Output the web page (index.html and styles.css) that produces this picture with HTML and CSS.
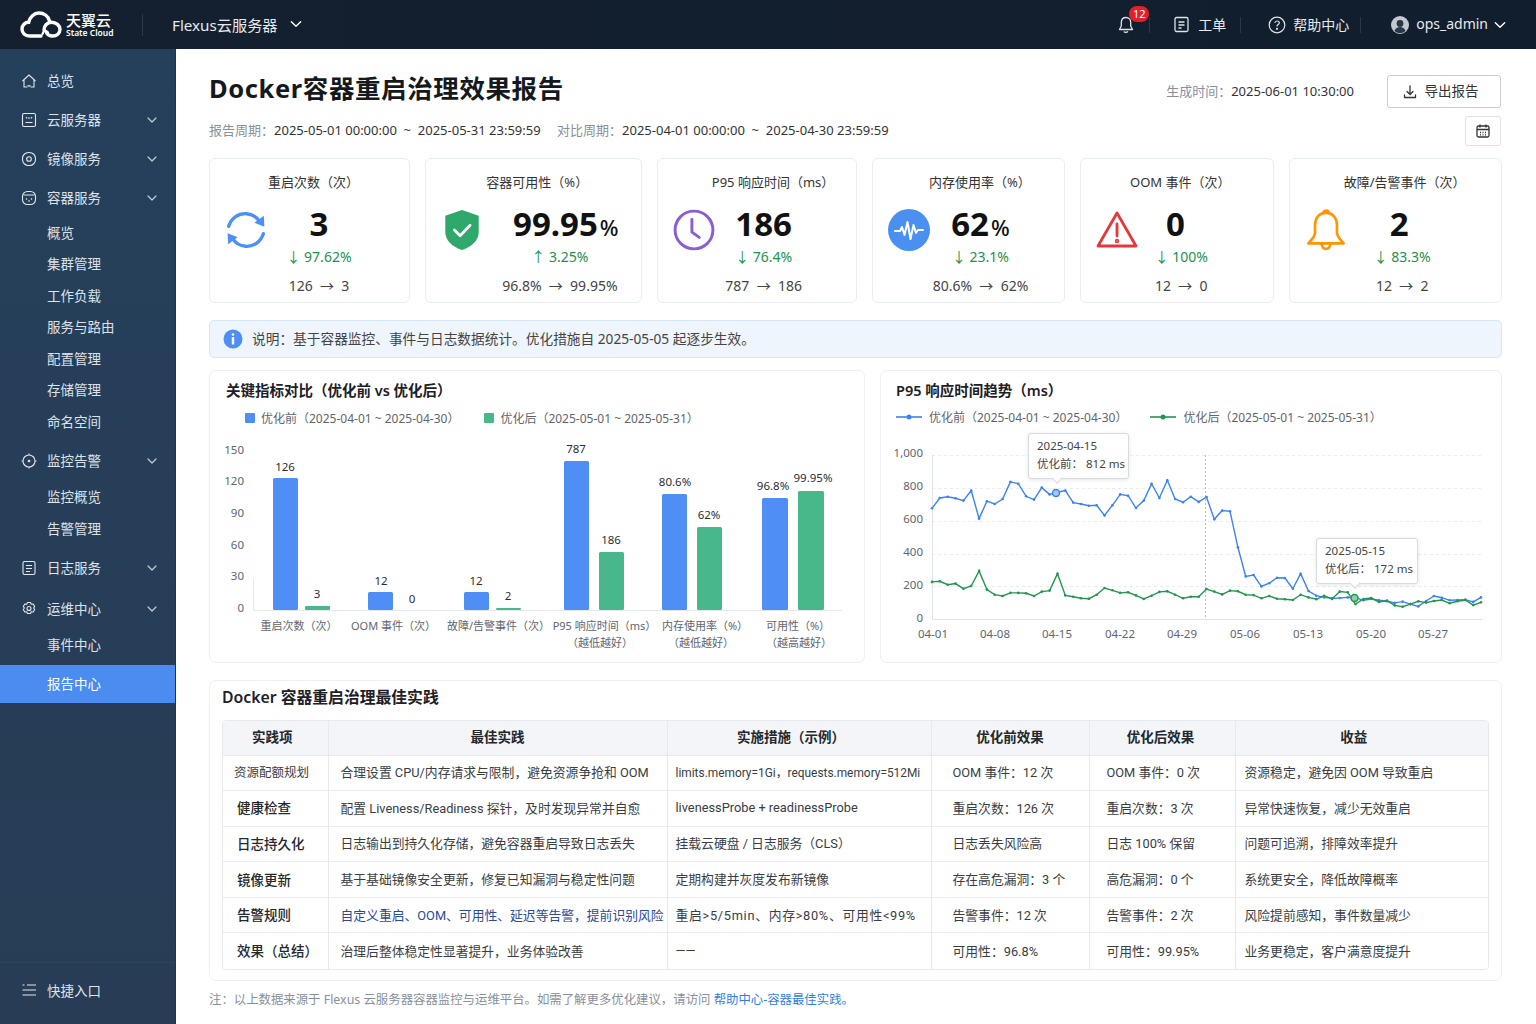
FILE: index.html
```html
<!DOCTYPE html>
<html lang="zh-CN">
<head>
    <meta charset="UTF-8">
    <meta name="viewport" content="width=device-width, initial-scale=1.0">
    <title>Docker容器重启治理效果报告</title>
    <link rel="stylesheet" href="styles.css">
</head>
<body>
    <svg class="sprite" width="0" height="0">
        <symbol id="i-chev" viewBox="0 0 12 12"><path d="M2 4l4 4 4-4" fill="none" stroke="currentColor" stroke-width="1.2" stroke-linecap="round" stroke-linejoin="round"/></symbol>
    </svg>

    <!-- 顶部导航 -->
    <header class="topbar">
        <div class="logo">
            <svg class="logo-cloud" viewBox="0 0 42 28" width="42" height="28" fill="none" stroke="#fff" stroke-width="3.4" stroke-linecap="round">
                <path d="M21 25H9.5C5 25 2 22 2 18c0-3.8 3-6.7 6.7-6.7C9.8 6 14 2 19 2c5 0 9 3.2 10.3 7.5"/>
                <path d="M24 19c0-4.500 3.300-7.700 7.500-7.700 4.700 0 8.500 3.300 8.500 7 0 4-3.300 6.700-7.500 6.700-2.800 0-5-1.300-6-3.500"/>
                <path d="M22.500 23l2-4 3.500 2.500" stroke-width="2.2"/>
            </svg>
            <div class="logo-text">
                <span class="logo-cn">天翼云</span>
                <span class="logo-en">State Cloud</span>
            </div>
        </div>
        <div class="top-sep"></div>
        <div class="product">Flexus云服务器<svg class="product-chev" width="14" height="14"><use href="#i-chev"/></svg></div>
        <div class="top-right">
            <div class="bell">
                <svg width="20" height="20" viewBox="0 0 20 20" fill="none" stroke="#dfe4ea" stroke-width="1.3" stroke-linejoin="round"><path d="M10 2.500c-3 0-4.700 2.300-4.700 5v3.500L3.500 14.500h13L14.700 11V7.500c0-2.700-1.700-5-4.700-5z"/><path d="M8 16.500c.4 1 2.400 1.500 4 0"/></svg>
                <span class="badge">12</span>
            </div>
            <div class="top-sep small"></div>
            <div class="top-link">
                <svg width="17" height="17" viewBox="0 0 17 17" fill="none" stroke="#dfe4ea" stroke-width="1.3"><rect x="2" y="1.500" width="13" height="14" rx="1.500"/><path d="M5.500 6h6M5.500 9h6M5.500 12h3"/></svg>
                <span>工单</span>
            </div>
            <div class="top-sep small"></div>
            <div class="top-link help">
                <svg width="18" height="18" viewBox="0 0 18 18" fill="none" stroke="#dfe4ea" stroke-width="1.2"><circle cx="9" cy="9" r="7.8"/><path d="M6.800 7c.2-1.300 1.100-2 2.300-2 1.300 0 2.200.8 2.200 1.900 0 1.700-2.300 1.700-2.300 3.500"/><circle cx="9" cy="12.8" r=".5" fill="#dfe4ea"/></svg>
                <span>帮助中心</span>
            </div>
            <div class="top-sep small"></div>
            <div class="top-link user">
                <svg width="18" height="18" viewBox="0 0 18 18"><circle cx="9" cy="9" r="9" fill="#c4c9cf"/><circle cx="9" cy="7.5" r="3.4" fill="#2a3747"/><path d="M3.500 15c1-3 3-4 5.500-4s4.500 1 5.500 4c-3 2.800-8 2.800-11 0z" fill="#2a3747"/></svg>
                <span>ops_admin</span>
                <svg class="user-chev" width="14" height="14"><use href="#i-chev"/></svg>
            </div>
        </div>
    </header>

    <div class="layout">
        <!-- 左侧菜单 -->
        <aside class="sidebar">
            <nav class="nav">
                <a class="nav-item">
                    <svg class="nav-icon" viewBox="0 0 16 16"><path d="M1.500 8L8 2l6.500 6M3 7v7h3.500M13 7v7H9.500"/><path d="M6.500 12.500c.8.700 2.200.7 3 0"/></svg>
                    <span class="nav-label">总览</span>
                </a>
                <a class="nav-item">
                    <svg class="nav-icon" viewBox="0 0 16 16"><rect x="1.500" y="1.500" width="13" height="13" rx="1.500"/><path d="M4.500 10.500h7M5 5l1 1.500M11 5l-1 1.500M7 6h2"/></svg>
                    <span class="nav-label">云服务器</span>
                    <svg class="nav-chev"><use href="#i-chev"/></svg>
                </a>
                <a class="nav-item">
                    <svg class="nav-icon" viewBox="0 0 16 16"><rect x="1.500" y="1.500" width="13" height="13" rx="6"/><circle cx="8" cy="8" r="2.3"/></svg>
                    <span class="nav-label">镜像服务</span>
                    <svg class="nav-chev"><use href="#i-chev"/></svg>
                </a>
                <a class="nav-item">
                    <svg class="nav-icon" viewBox="0 0 16 16"><rect x="1.500" y="1.500" width="13" height="13" rx="5"/><path d="M2.500 5h11M5 8.500l1 1M11 8.500l-1 1M7 11h2"/></svg>
                    <span class="nav-label">容器服务</span>
                    <svg class="nav-chev"><use href="#i-chev"/></svg>
                </a>
                <div class="nav-group first">
                    <a class="nav-sub">概览</a>
                    <a class="nav-sub">集群管理</a>
                    <a class="nav-sub">工作负载</a>
                    <a class="nav-sub">服务与路由</a>
                    <a class="nav-sub">配置管理</a>
                    <a class="nav-sub">存储管理</a>
                    <a class="nav-sub">命名空间</a>
                </div>
                <a class="nav-item gap-a">
                    <svg class="nav-icon" viewBox="0 0 16 16"><circle cx="8" cy="8" r="6"/><path d="M8 .5V2M8 14v1.500M.5 8H2M14 8h1.500"/><circle cx="8" cy="8" r=".8"/></svg>
                    <span class="nav-label">监控告警</span>
                    <svg class="nav-chev"><use href="#i-chev"/></svg>
                </a>
                <div class="nav-group monitor">
                    <a class="nav-sub">监控概览</a>
                    <a class="nav-sub">告警管理</a>
                </div>
                <a class="nav-item gap-b">
                    <svg class="nav-icon" viewBox="0 0 16 16"><rect x="2" y="1.500" width="12" height="13" rx="1.500"/><path d="M5 5.500h6M5 8.500h6M5 11.500h4"/></svg>
                    <span class="nav-label">日志服务</span>
                    <svg class="nav-chev"><use href="#i-chev"/></svg>
                </a>
                <a class="nav-item gap-c">
                    <svg class="nav-icon" viewBox="0 0 16 16"><path d="M6.500 1.500h3l.8 1.700 1.900-.2 1.500 2.500-1.100 1.500 1.100 1.500-1.500 2.500-1.900-.2-.8 1.700h-3l-.8-1.700-1.900.2-1.500-2.500 1.100-1.500-1.100-1.500 1.500-2.500 1.900.2z" stroke-linejoin="round"/><circle cx="8" cy="7.500" r="2"/></svg>
                    <span class="nav-label">运维中心</span>
                    <svg class="nav-chev"><use href="#i-chev"/></svg>
                </a>
                <div class="nav-group ops">
                    <a class="nav-sub">事件中心</a>
                    <a class="nav-sub active">报告中心</a>
                </div>
            </nav>
            <div class="quick">
                <svg class="nav-icon" viewBox="0 0 16 16"><path d="M1.500 3h2M6 3h9M1.500 8h13.500M1.500 13h13.500"/></svg>
                快捷入口
            </div>
        </aside>

        <main class="main">
            <section class="report-head">
                <div>
                    <h1 class="report-title">Docker容器重启治理效果报告</h1>
                    <p class="report-period">
                        <span class="muted">报告周期：</span>2025-05-01 00:00:00 &nbsp;~&nbsp; 2025-05-31 23:59:59
                        <span class="muted period-gap">对比周期：</span>2025-04-01 00:00:00 &nbsp;~&nbsp; 2025-04-30 23:59:59
                    </p>
                </div>
                <div class="head-actions">
                    <div class="head-row">
                        <span class="gen-time"><span class="muted">生成时间：</span>2025-06-01 10:30:00</span>
                        <button class="btn-export">
                            <svg width="16" height="16" viewBox="0 0 16 16" fill="none" stroke="#333" stroke-width="1.3" stroke-linecap="round" stroke-linejoin="round"><path d="M8 2v8M5 7.500L8 10.500l3-3M2.500 11v2.500h11V11"/></svg>
                            <span class="btn-label">导出报告</span>
                        </button>
                    </div>
                    <button class="btn-calendar">
                        <svg width="16" height="16" viewBox="0 0 16 16" fill="none" stroke="#333" stroke-width="1.3"><rect x="2" y="3" width="12" height="11" rx="1.500"/><path d="M2 6.500h12M5 1.500v3M11 1.500v3M5 9.500h1M7.500 9.500h1M10 9.500h1M5 11.800h1M7.500 11.800h1M10 11.800h1"/></svg>
                    </button>
                </div>
            </section>

            <!-- 指标卡片 -->
            <section class="kpis">
                <div class="kpi kpi-restart">
                    <div class="kpi-title">重启次数（次）</div>
                    <div class="kpi-body">
                        <svg class="kpi-icon" viewBox="0 0 40 40" fill="none" stroke="#4a90f5" stroke-width="3.2" stroke-linecap="round">
                            <path d="M3.500 16.500C6 8.500 13 4 20.500 4.500c5.500.4 9.500 3 12.500 7.500"/>
                            <path d="M36.500 23.500C34 31.500 27 36 19.500 35.500 14 35.100 10 32.500 7 28"/>
                            <path d="M37 6.500l.5 10.500-9.500-4z" fill="#4a90f5" stroke="none"/>
                            <path d="M3 33.500L2.500 23l9.500 4z" fill="#4a90f5" stroke="none"/>
                        </svg>
                        <div class="kpi-stack">
                            <div class="kpi-value">3</div>
                            <div class="kpi-delta">↓ 97.62%</div>
                            <div class="kpi-compare">126 &nbsp;→&nbsp; 3</div>
                        </div>
                    </div>
                </div>
                <div class="kpi kpi-avail">
                    <div class="kpi-title">容器可用性（%）</div>
                    <div class="kpi-body">
                        <svg class="kpi-icon" viewBox="0 0 40 44">
                            <path d="M20 1l17.500 6v17C37.500 33 30 39.500 20 43 10 39.500 2.500 33 2.500 24V7z" fill="#2fa96b"/>
                            <path d="M12 22l6 6 10.500-11" fill="none" stroke="#fff" stroke-width="2.8" stroke-linecap="round" stroke-linejoin="round"/>
                        </svg>
                        <div class="kpi-stack">
                            <div class="kpi-value">99.95<small>%</small></div>
                            <div class="kpi-delta">↑ 3.25%</div>
                            <div class="kpi-compare">96.8% &nbsp;→&nbsp; 99.95%</div>
                        </div>
                    </div>
                </div>
                <div class="kpi kpi-p95">
                    <div class="kpi-title">P95 响应时间（ms）</div>
                    <div class="kpi-body">
                        <svg class="kpi-icon" viewBox="0 0 40 40" fill="none" stroke="#8a5fd3" stroke-width="2.8" stroke-linecap="round" stroke-linejoin="round">
                            <circle cx="20" cy="20" r="18"/><path d="M18 10v12l7 5"/>
                        </svg>
                        <div class="kpi-stack">
                            <div class="kpi-value">186</div>
                            <div class="kpi-delta">↓ 76.4%</div>
                            <div class="kpi-compare">787 &nbsp;→&nbsp; 186</div>
                        </div>
                    </div>
                </div>
                <div class="kpi kpi-mem">
                    <div class="kpi-title">内存使用率（%）</div>
                    <div class="kpi-body">
                        <svg class="kpi-icon" viewBox="0 0 42 42">
                            <circle cx="21" cy="21" r="21" fill="#4a90f0"/>
                            <path d="M7 22h5l2-4 2.500 8 3-13 3 17 3-14 2.500 8 2-3h5" fill="none" stroke="#fff" stroke-width="2" stroke-linecap="round" stroke-linejoin="round"/>
                        </svg>
                        <div class="kpi-stack">
                            <div class="kpi-value">62<small>%</small></div>
                            <div class="kpi-delta">↓ 23.1%</div>
                            <div class="kpi-compare">80.6% &nbsp;→&nbsp; 62%</div>
                        </div>
                    </div>
                </div>
                <div class="kpi kpi-oom">
                    <div class="kpi-title">OOM 事件（次）</div>
                    <div class="kpi-body">
                        <svg class="kpi-icon" viewBox="0 0 42 40" fill="none" stroke="#e5383b" stroke-width="2.8" stroke-linecap="round" stroke-linejoin="round">
                            <path d="M21 3L2 36h38z"/><path d="M21 14v12"/><circle cx="21" cy="31" r=".8"/>
                        </svg>
                        <div class="kpi-stack">
                            <div class="kpi-value">0</div>
                            <div class="kpi-delta">↓ 100%</div>
                            <div class="kpi-compare">12 &nbsp;→&nbsp; 0</div>
                        </div>
                    </div>
                </div>
                <div class="kpi kpi-alarm">
                    <div class="kpi-title">故障/告警事件（次）</div>
                    <div class="kpi-body">
                        <svg class="kpi-icon" viewBox="0 0 42 44" fill="none" stroke="#ff9500" stroke-width="2.8" stroke-linecap="round" stroke-linejoin="round">
                            <path d="M21 4c-7.500 0-11.500 6-11.500 13v8c0 4-3 7-7 11h37c-4-4-7-7-7-11v-8c0-7-4-13-11.500-13z"/>
                            <path d="M18.500 3.500c0-2.500 5-2.500 5 0M16.500 36.500c0 7 9 7 9 0"/>
                        </svg>
                        <div class="kpi-stack">
                            <div class="kpi-value">2</div>
                            <div class="kpi-delta">↓ 83.3%</div>
                            <div class="kpi-compare">12 &nbsp;→&nbsp; 2</div>
                        </div>
                    </div>
                </div>
            </section>

            <section class="notice">
                <svg width="20" height="20" viewBox="0 0 20 20"><circle cx="10" cy="10" r="9.5" fill="#4f8ff5"/><circle cx="10" cy="5.5" r="1.3" fill="#fff"/><rect x="8.8" y="8" width="2.4" height="7.5" rx=".6" fill="#fff"/></svg>
                <span class="notice-text">说明：基于容器监控、事件与日志数据统计。优化措施自 2025-05-05 起逐步生效。</span>
            </section>

            <section class="charts">
                <div class="panel chart-bar">
                    <h3 class="chart-title">关键指标对比（优化前 vs 优化后）</h3>
                    <div class="legend">
                        <span class="legend-item"><i class="swatch blue"></i>优化前（2025-04-01 ~ 2025-04-30）</span>
                        <span class="legend-item"><i class="swatch green"></i>优化后（2025-05-01 ~ 2025-05-31）</span>
                    </div>
                    <svg class="chart-svg" width="654" height="234" viewBox="210 428 654 234">
                        <g class="axis-y" text-anchor="end">
                            <text x="244" y="454">150</text>
                            <text x="244" y="485">120</text>
                            <text x="244" y="517">90</text>
                            <text x="244" y="549">60</text>
                            <text x="244" y="580">30</text>
                            <text x="244" y="612">0</text>
                        </g>
                        <path d="M253.500 579V610.500H842" fill="none" stroke="#e4e8ef"/>
                        <g fill="#4f8ff5">
                            <rect x="273" y="478" width="25" height="132" rx="1.5"/>
                            <rect x="368" y="592" width="25" height="18" rx="1.5"/>
                            <rect x="464" y="592" width="25" height="18" rx="1.5"/>
                            <rect x="564" y="461" width="25" height="149" rx="1.5"/>
                            <rect x="662" y="494" width="25" height="116" rx="1.5"/>
                            <rect x="762" y="498" width="26" height="112" rx="1.5"/>
                        </g>
                        <g fill="#48b78a">
                            <rect x="305" y="606" width="25" height="4" rx="1"/>
                            <rect x="496" y="608" width="25" height="2" rx="1"/>
                            <rect x="599" y="552" width="25" height="58" rx="1.5"/>
                            <rect x="697" y="527" width="25" height="83" rx="1.5"/>
                            <rect x="798" y="491" width="26" height="119" rx="1.5"/>
                        </g>
                        <g class="bar-val" text-anchor="middle">
                            <text x="285" y="471">126</text>
                            <text x="317" y="598">3</text>
                            <text x="381" y="585">12</text>
                            <text x="412" y="603">0</text>
                            <text x="476" y="585">12</text>
                            <text x="508" y="600">2</text>
                            <text x="576" y="453">787</text>
                            <text x="611" y="544">186</text>
                            <text x="675" y="486">80.6%</text>
                            <text x="709" y="519">62%</text>
                            <text x="773" y="490">96.8%</text>
                            <text x="813" y="482">99.95%</text>
                        </g>
                        <g class="axis-x" text-anchor="middle">
                            <text x="299" y="630">重启次数（次）</text>
                            <text x="393.500" y="630">OOM 事件（次）</text>
                            <text x="498.500" y="630">故障/告警事件（次）</text>
                            <text x="604.500" y="630">P95 响应时间（ms）</text>
                            <text x="600" y="647">（越低越好）</text>
                            <text x="705" y="630">内存使用率（%）</text>
                            <text x="701" y="647">（越低越好）</text>
                            <text x="798" y="630">可用性（%）</text>
                            <text x="799" y="647">（越高越好）</text>
                        </g>
                    </svg>
                </div>

                <div class="panel chart-line">
                    <h3 class="chart-title">P95 响应时间趋势（ms）</h3>
                    <div class="legend">
                        <span class="legend-item"><svg width="26" height="8"><path d="M0 4h26" stroke="#3b82f6" stroke-width="1.6"/><circle cx="13" cy="4" r="2.5" fill="#3b82f6"/></svg>优化前（2025-04-01 ~ 2025-04-30）</span>
                        <span class="legend-item"><svg width="26" height="8"><path d="M0 4h26" stroke="#22964f" stroke-width="1.6"/><circle cx="13" cy="4" r="2.5" fill="#22964f"/></svg>优化后（2025-05-01 ~ 2025-05-31）</span>
                    </div>
                    <svg class="chart-svg" width="620" height="234" viewBox="881 428 620 234">
                        <g class="grid">
                            <path d="M932 455.500H1482M932 488.500H1482M932 521.500H1482M932 554.500H1482M932 586.500H1482"/>
                        </g>
                        <path d="M932.500 455V619.500H1482" fill="none" stroke="#dfe3ea"/>
                        <path d="M1205.500 455V619" fill="none" stroke="#b5bbc4" stroke-dasharray="2 2"/>
                        <g class="axis-y" text-anchor="end">
                            <text x="923" y="457">1,000</text>
                            <text x="923" y="490">800</text>
                            <text x="923" y="523">600</text>
                            <text x="923" y="556">400</text>
                            <text x="923" y="589">200</text>
                            <text x="923" y="622">0</text>
                        </g>
                        <g class="axis-y" text-anchor="middle">
                            <text x="933" y="638">04-01</text>
                            <text x="995" y="638">04-08</text>
                            <text x="1057" y="638">04-15</text>
                            <text x="1120" y="638">04-22</text>
                            <text x="1182" y="638">04-29</text>
                            <text x="1245" y="638">05-06</text>
                            <text x="1308" y="638">05-13</text>
                            <text x="1371" y="638">05-20</text>
                            <text x="1433" y="638">05-27</text>
                        </g>
                        <g id="trend"></g>
                        <circle cx="1056" cy="493" r="3.5" fill="#a9c8fa" stroke="#3b82f6" stroke-width="1.5"/>
                        <circle cx="1354.500" cy="598" r="3.5" fill="#8fd0a8" stroke="#22964f" stroke-width="1.5"/>
                    </svg>
                    <div class="tip tip-before">2025-04-15<br>优化前： 812 ms</div>
                    <div class="tip tip-after">2025-05-15<br>优化后： 172 ms</div>
                </div>
            </section>

            <!-- 最佳实践表格 -->
            <section class="panel practice">
                <h3 class="practice-title">Docker 容器重启治理最佳实践</h3>
                <div class="table-wrap">
                    <table class="table">
                        <colgroup>
                            <col class="c1"><col class="c2"><col class="c3"><col class="c4"><col class="c5"><col class="c6">
                        </colgroup>
                        <thead>
                            <tr><th>实践项</th><th>最佳实践</th><th>实施措施（示例）</th><th>优化前效果</th><th>优化后效果</th><th>收益</th></tr>
                        </thead>
                        <tbody>
                            <tr><td class="first-plain">资源配额规划</td><td>合理设置 CPU/内存请求与限制，避免资源争抢和 OOM</td><td class="tight">limits.memory=1Gi，requests.memory=512Mi</td><td>OOM 事件：12 次</td><td>OOM 事件：0 次</td><td>资源稳定，避免因 OOM 导致重启</td></tr>
                            <tr><td>健康检查</td><td>配置 Liveness/Readiness 探针，及时发现异常并自愈</td><td>livenessProbe + readinessProbe</td><td>重启次数：126 次</td><td>重启次数：3 次</td><td>异常快速恢复，减少无效重启</td></tr>
                            <tr><td>日志持久化</td><td>日志输出到持久化存储，避免容器重启导致日志丢失</td><td>挂载云硬盘 / 日志服务（CLS）</td><td>日志丢失风险高</td><td>日志 100% 保留</td><td>问题可追溯，排障效率提升</td></tr>
                            <tr><td>镜像更新</td><td>基于基础镜像安全更新，修复已知漏洞与稳定性问题</td><td>定期构建并灰度发布新镜像</td><td>存在高危漏洞：3 个</td><td>高危漏洞：0 个</td><td>系统更安全，降低故障概率</td></tr>
                            <tr><td>告警规则</td><td class="accent">自定义重启、OOM、可用性、延迟等告警，提前识别风险</td><td class="spaced">重启&gt;5/5min、内存&gt;80%、可用性&lt;99%</td><td>告警事件：12 次</td><td>告警事件：2 次</td><td>风险提前感知，事件数量减少</td></tr>
                            <tr><td>效果（总结）</td><td>治理后整体稳定性显著提升，业务体验改善</td><td>——</td><td>可用性：96.8%</td><td>可用性：99.95%</td><td>业务更稳定，客户满意度提升</td></tr>
                        </tbody>
                    </table>
                </div>
            </section>

            <p class="footnote">注：以上数据来源于 Flexus 云服务器容器监控与运维平台。如需了解更多优化建议，请访问 <a class="footnote-link">帮助中心-容器最佳实践。</a></p>
        </main>
    </div>

    <script src="chart.js"></script>
</body>
</html>
```

FILE: styles.css
```css
*{
    margin: 0;
    padding: 0;
    box-sizing: border-box;
}
html,body{
    height: 100%;
}
body{
    overflow: hidden;
    background: #fff;
    color: #333;
    font-family: "Noto Sans", "Noto Sans CJK SC", sans-serif;
    font-size: 13px;
}
.sprite{
    position: absolute;
}

/* 顶部导航 */
.topbar{
    height: 49px;
    display: flex;
    align-items: center;
    padding-left: 20px;
    background: linear-gradient(90deg, #14202f, #111e2d);
    color: #e6eaef;
}
.logo{
    display: flex;
    align-items: center;
    gap: 4px;
    width: 122px;
}
.logo-text{
    display: flex;
    flex-direction: column;
    color: #fff;
}
.logo-cn{
    font-size: 15px;
    line-height: 16px;
    font-weight: 500;
}
.logo-en{
    font-size: 8.5px;
    line-height: 10px;
    font-weight: 600;
}
.top-sep{
    width: 1px;
    height: 22px;
    background: #2a3849;
}
.top-sep.small{
    height: 16px;
}
.product{
    display: flex;
    align-items: center;
    margin-left: 29px;
    padding-bottom: 2px;
    font-size: 15.2px;
}
.product-chev{
    margin-left: 11px;
    color: #fff;
}
.top-right{
    margin-left: auto;
    display: flex;
    align-items: center;
    padding-right: 29px;
    font-size: 14px;
}
.bell{
    position: relative;
    display: flex;
    margin-right: 13px;
}
.badge{
    position: absolute;
    left: 13px;
    top: -9px;
    width: 20px;
    height: 16px;
    border-radius: 8px;
    background: #e0202a;
    color: #fff;
    font-size: 11px;
    line-height: 16px;
    text-align: center;
}
.top-link{
    display: flex;
    align-items: center;
    gap: 8px;
    margin-left: 23px;
    margin-right: 14px;
}
.top-link span{
    position: relative;
    top: -1px;
}
.top-link.help{
    margin-left: 27px;
    margin-right: 11px;
    gap: 7px;
}
.top-link.user{
    margin-left: 30px;
    margin-right: 0;
    gap: 7px;
}
.user-chev{
    margin-left: -2px;
    color: #fff;
}

/* 左侧菜单 */
.layout{
    display: flex;
    height: 975px;
}
.sidebar{
    width: 176px;
    flex: none;
    display: flex;
    flex-direction: column;
    background: linear-gradient(180deg, #25405b, #283c55);
    border-right: 1px solid #1f334a;
    color: #dde3ea;
}
.nav{
    flex: 1;
    padding-top: 12px;
}
.nav-item{
    height: 39px;
    display: flex;
    align-items: center;
    padding-left: 21px;
    font-size: 13.5px;
}
.nav-label{
    position: relative;
    top: -1px;
}
.gap-a{
    margin-top: 3px;
}
.gap-b{
    margin-top: 3.5px;
}
.gap-c{
    margin-top: 2px;
}
.nav-icon{
    width: 16px;
    height: 16px;
    margin-right: 10px;
    flex: none;
    fill: none;
    stroke: #e3e8ee;
    stroke-width: 1.1;
}
.nav-chev{
    width: 12px;
    height: 12px;
    margin-left: auto;
    margin-right: 17px;
    color: #c3ccd6;
}
.nav-sub{
    display: block;
    height: 31.5px;
    line-height: 31.5px;
    padding-left: 47px;
    font-size: 13.5px;
}
.nav-group.first{
    padding-top: .5px;
}
.nav-group.monitor{
    padding-top: .5px;
}
.nav-group.monitor .nav-sub{
    height: 32px;
    line-height: 32px;
}
.nav-group.ops{
    padding-top: 1.75px;
}
.nav-sub.active{
    height: 38px;
    line-height: 38px;
    margin-top: 3.25px;
    background: #4a8cf0;
    color: #fff;
}
.quick{
    height: 62px;
    display: flex;
    align-items: center;
    padding-left: 21px;
    padding-bottom: 8px;
    border-top: 1px solid #2f4560;
    font-size: 13.5px;
}

/* 主内容 */
.main{
    flex: 1;
    min-width: 0;
    padding: 26px 34px 0 33px;
}
.muted{
    color: #8a9099;
}
.report-head{
    display: flex;
    justify-content: space-between;
}
.report-title{
    margin-top: -2px;
    font-size: 25.5px;
    line-height: 30px;
    letter-spacing: .6px;
    font-weight: 700;
    color: #15181c;
}
.report-period{
    margin-top: 17px;
    font-size: 13px;
    line-height: 20px;
}
.period-gap{
    margin-left: 13px;
}
.head-actions{
    display: flex;
    flex-direction: column;
    align-items: flex-end;
    gap: 8px;
    margin-right: 1px;
}
.head-row{
    display: flex;
    align-items: center;
    gap: 33px;
}
.gen-time{
    position: relative;
    top: -1px;
    font-size: 13px;
}
.btn-export{
    width: 114px;
    height: 33px;
    display: flex;
    align-items: center;
    justify-content: center;
    gap: 7px;
    padding-right: 8px;
    background: #fff;
    border: 1px solid #c9ced6;
    border-radius: 3px;
    font: inherit;
    font-size: 13.5px;
    color: #333;
}
.btn-label{
    position: relative;
    top: -1.5px;
}
.btn-calendar{
    width: 36px;
    height: 30px;
    display: flex;
    align-items: center;
    justify-content: center;
    background: #fff;
    border: 1px solid #dfe2e7;
    border-radius: 3px;
}

/* 指标卡片 */
.kpis{
    display: grid;
    grid-template-columns: 201fr 217fr 201fr 193fr 194fr 213fr;
    column-gap: 15px;
    margin-top: 12px;
    height: 145px;
}
.kpi{
    --title-shift: 8px;
    --stack-left: 59px;
    --value-shift: 0px;
    padding-top: 13px;
    border: 1px solid #eaedf1;
    border-radius: 6px;
}
.kpi-title{
    line-height: 20px;
    text-align: center;
    padding-left: var(--title-shift);
    font-size: 13px;
}
.kpi-body{
    position: relative;
    margin-top: 14px;
}
.kpi-icon{
    position: absolute;
    left: 15px;
    top: 3px;
    width: 42px;
    height: 42px;
}
.kpi-stack{
    width: 100px;
    margin-left: var(--stack-left);
    display: flex;
    flex-direction: column;
    align-items: center;
    white-space: nowrap;
}
.kpi-value{
    height: 36px;
    line-height: 36px;
    font-size: 33px;
    font-weight: 700;
    color: #111;
    padding-left: var(--value-shift);
}
.kpi-value small{
    margin-left: 2px;
    font-size: 22px;
    font-weight: 500;
}
.kpi-delta{
    margin-top: 5px;
    line-height: 20px;
    font-size: 14px;
    color: #229150;
}
.kpi-compare{
    margin-top: 9px;
    line-height: 20px;
    font-size: 14px;
    color: #444;
}
.kpi-avail{
    --stack-left: 84px;
    --value-shift: 12px;
}
.kpi-p95{
    --title-shift: 32px;
    --stack-left: 56px;
}
.kpi-mem{
    --title-shift: 22px;
    --stack-left: 57px;
}
.kpi-oom{
    --title-shift: 6px;
    --stack-left: 50px;
}
.kpi-oom .kpi-value{
    padding-right: 12px;
}
.kpi-alarm{
    --title-shift: 18px;
    --stack-left: 62px;
}
.kpi-alarm .kpi-value{
    padding-right: 6px;
}

/* 说明条 */
.notice{
    display: flex;
    align-items: center;
    gap: 9px;
    height: 38px;
    margin-top: 17px;
    padding-left: 13px;
    background: #eef5fd;
    border: 1px solid #d6e6f9;
    border-radius: 5px;
    color: #444;
    font-size: 13.7px;
}
.notice-text{
    position: relative;
    top: -1.5px;
}

/* 图表 */
.charts{
    display: grid;
    grid-template-columns: 656px 622px;
    column-gap: 15px;
    margin-top: 12px;
    height: 293px;
}
.panel{
    position: relative;
    border: 1px solid #edeff3;
    border-radius: 7px;
    background: #fff;
}
.chart-title{
    margin-top: 9px;
    line-height: 20px;
    font-size: 14.5px;
    font-weight: 600;
    color: #1d2026;
}
.chart-bar .chart-title{
    padding-left: 16px;
}
.chart-line .chart-title{
    padding-left: 15px;
}
.legend{
    display: flex;
    height: 18px;
    margin-top: 9px;
    margin-bottom: 1px;
    align-items: center;
    font-size: 12px;
    color: #5f656e;
}
.legend-item{
    display: flex;
    align-items: center;
}
.chart-bar .legend{
    padding-left: 35px;
    gap: 25px;
}
.chart-line .legend{
    position: relative;
    top: -1px;
    padding-left: 15px;
    gap: 23px;
}
.chart-line .legend-item svg{
    margin-right: 7px;
}
.swatch{
    width: 10px;
    height: 10px;
    margin-right: 6px;
    border-radius: 1px;
}
.swatch.blue{
    background: #4f8ff5;
}
.swatch.green{
    background: #48b78a;
}
.chart-svg{
    display: block;
}
.chart-svg text{
    font-size: 11.5px;
}
.axis-y text,.axis-x text{
    fill: #5f656e;
}
.axis-x text{
    font-size: 11px;
}
.bar-val text{
    fill: #2b2e33;
}
.grid path{
    fill: none;
    stroke: #e8ebef;
    stroke-dasharray: 3 3;
}
.tip{
    position: absolute;
    padding: 3px 8px 5px;
    background: #fff;
    border: 1px solid #d7dbe1;
    border-radius: 3px;
    box-shadow: 0 1px 4px rgba(0, 0, 0, 0.1);
    font-size: 11.5px;
    line-height: 18px;
    color: #444;
    white-space: nowrap;
}
.tip::after{
    content: "";
    position: absolute;
    top: 100%;
    margin-top: -4px;
    width: 7px;
    height: 7px;
    background: #fff;
    border-right: 1px solid #d7dbe1;
    border-bottom: 1px solid #d7dbe1;
    transform: rotate(45deg);
}
.tip-before{
    left: 147px;
    top: 62px;
    width: 101px;
}
.tip-before::after{
    left: 24px;
}
.tip-after{
    left: 435px;
    top: 167px;
    width: 102px;
}
.tip-after::after{
    left: 34px;
}

/* 表格 */
.practice{
    margin-top: 17px;
    height: 301px;
    padding: 6px 12px 0;
}
.practice-title{
    line-height: 20px;
    font-size: 15.8px;
    font-weight: 600;
    color: #1d2026;
}
.table-wrap{
    margin-top: 13px;
    border: 1px solid #e6e9ee;
    border-radius: 4px;
    overflow: hidden;
}
.table{
    width: 100%;
    table-layout: fixed;
    border-collapse: collapse;
    font-family: Roboto, "Noto Sans CJK SC", sans-serif;
    font-size: 12.8px;
    color: #3a3d42;
}
.c1{width: 105px;}
.c2{width: 339px;}
.c3{width: 264px;}
.c4{width: 158px;}
.c5{width: 146px;}
.table th{
    height: 34px;
    padding-bottom: 3px;
    background: #f3f5f8;
    border-bottom: 1px solid #e6e9ee;
    border-left: 1px solid #e6e9ee;
    font-size: 13.5px;
    font-weight: 600;
    color: #24272c;
}
.table th:nth-child(1){
    padding-right: 6px;
}
.table th:nth-child(3){
    padding-right: 16px;
}
.table th:nth-child(5){
    padding-right: 3px;
}
.table th:nth-child(6){
    padding-right: 16px;
}
.table th:first-child,.table td:first-child{
    border-left: 0;
}
.table td{
    height: 35.6px;
    padding-bottom: 2px;
    border-top: 1px solid #e9ecf0;
    border-left: 1px solid #e6e9ee;
    white-space: nowrap;
}
.table td:nth-child(1){
    padding-left: 14px;
    font-size: 13.5px;
    font-weight: 500;
    color: #24272c;
}
.table td.first-plain{
    padding-left: 11px;
    font-size: 12.5px;
    font-weight: 400;
    color: #3a3d42;
}
.table td:nth-child(2){
    padding-left: 12px;
}
.table td:nth-child(3){
    padding-left: 8px;
}
.table td:nth-child(4){
    padding-left: 21px;
}
.table td:nth-child(5){
    padding-left: 17px;
}
.table td:nth-child(6){
    padding-left: 9px;
}
.table td.tight{
    font-size: 11.9px;
}
.table td.spaced{
    letter-spacing: .7px;
}
.table td.accent{
    color: #2a4a9c;
}
.footnote{
    margin-top: 9px;
    line-height: 20px;
    font-size: 12.4px;
    color: #8a9099;
}
.footnote-link{
    color: #2f80e6;
}
```

FILE: chart.js
```js
(function(document) {
    var before = [675,738,746,736,722,783,612,718,701,732,836,825,748,728,801,760,773,783,710,701,691,693,632,693,760,752,677,722,825,738,846,732,712,746,714,744,608,661,657,437,260,268,199,218,252,250,185,276,171,142,132,126,128,132,130,114,122,114,108,98,106,91,77,110,140,130,114,116,118,104,132],
        after = [226,230,209,216,185,201,293,179,148,140,159,159,157,140,167,173,276,144,136,126,124,148,189,175,159,163,144,122,142,165,169,148,126,136,136,183,167,150,173,169,148,146,126,140,124,120,116,148,132,120,142,122,167,163,91,122,128,104,112,83,75,91,108,100,110,116,96,108,116,85,102],
        trend = document.getElementById('trend'),
        ns = 'http://www.w3.org/2000/svg',
        x0 = 932, step = 549 / 70, y0 = 619, scale = 0.164;

    // 画一条折线和它的小圆点
    function draw(data, color) {
        var points = [], i, x, y, line, dot;
        for(i = 0; i < data.length; i++) {
            x = x0 + i * step;
            y = y0 - data[i] * scale;
            points.push(x.toFixed(1) + ',' + y.toFixed(1));
            dot = document.createElementNS(ns, 'circle');
            dot.setAttribute('cx', x.toFixed(1));
            dot.setAttribute('cy', y.toFixed(1));
            dot.setAttribute('r', 1.3);
            dot.setAttribute('fill', color);
            trend.appendChild(dot);
        }
        line = document.createElementNS(ns, 'polyline');
        line.setAttribute('points', points.join(' '));
        line.setAttribute('fill', 'none');
        line.setAttribute('stroke', color);
        line.setAttribute('stroke-width', 1.4);
        trend.appendChild(line);
    }

    draw(before, '#3b82f6');
    draw(after, '#22964f');
})(document);
```
